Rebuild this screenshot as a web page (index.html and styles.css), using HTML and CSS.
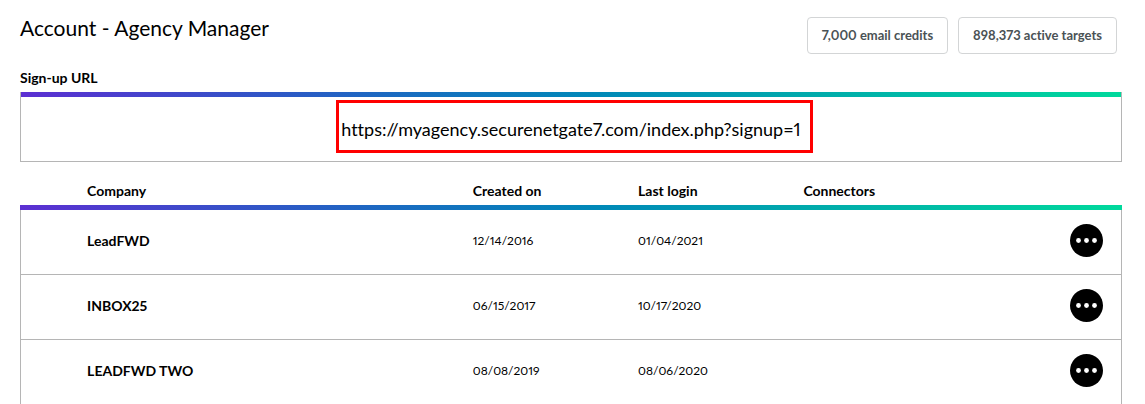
FILE: index.html
```html
<!DOCTYPE html>
<html lang="en">
<head>
  <meta charset="UTF-8">
  <meta name="viewport" content="width=device-width, initial-scale=1.0">
  <title>Account - Agency Manager</title>
  <link rel="stylesheet" href="styles.css">
</head>
<body>

  <header class="page-header">
    <h1>Account - Agency Manager</h1>
    <div class="stats">
      <span class="stat">7,000 email credits</span>
      <span class="stat">898,373 active targets</span>
    </div>
  </header>

  <!-- Sign-up URL -->
  <section class="signup">
    <h2>Sign-up URL</h2>
    <div class="signup-box">
      <a class="signup-link" href="https://myagency.securenetgate7.com/index.php?signup=1">https://myagency.securenetgate7.com/index.php?signup=1</a>
    </div>
  </section>

  <!-- Companies -->
  <table class="companies">
    <colgroup>
      <col class="col-check">
      <col class="col-company">
      <col class="col-date">
      <col class="col-date">
      <col class="col-connectors">
      <col class="col-menu">
    </colgroup>
    <thead>
      <tr>
        <th></th>
        <th scope="col">Company</th>
        <th scope="col">Created on</th>
        <th scope="col">Last login</th>
        <th scope="col">Connectors</th>
        <th></th>
      </tr>
      <tr class="bar">
        <td colspan="6"></td>
      </tr>
    </thead>
    <tbody>
      <tr>
        <td></td>
        <td class="name">LeadFWD</td>
        <td>12/14/2016</td>
        <td>01/04/2021</td>
        <td></td>
        <td class="menu">
          <button type="button" class="menu-btn" aria-label="LeadFWD options">
            <svg width="33" height="33" viewBox="0 0 33 33"><circle cx="16.5" cy="16.5" r="16.5"/><g fill="#fff"><circle cx="8.5" cy="16.5" r="2.4"/><circle cx="16.5" cy="16.5" r="2.4"/><circle cx="24.5" cy="16.5" r="2.4"/></g></svg>
          </button>
        </td>
      </tr>
      <tr>
        <td></td>
        <td class="name">INBOX25</td>
        <td>06/15/2017</td>
        <td>10/17/2020</td>
        <td></td>
        <td class="menu">
          <button type="button" class="menu-btn" aria-label="INBOX25 options">
            <svg width="33" height="33" viewBox="0 0 33 33"><circle cx="16.5" cy="16.5" r="16.5"/><g fill="#fff"><circle cx="8.5" cy="16.5" r="2.4"/><circle cx="16.5" cy="16.5" r="2.4"/><circle cx="24.5" cy="16.5" r="2.4"/></g></svg>
          </button>
        </td>
      </tr>
      <tr>
        <td></td>
        <td class="name">LEADFWD TWO</td>
        <td>08/08/2019</td>
        <td>08/06/2020</td>
        <td></td>
        <td class="menu">
          <button type="button" class="menu-btn" aria-label="LEADFWD TWO options">
            <svg width="33" height="33" viewBox="0 0 33 33"><circle cx="16.5" cy="16.5" r="16.5"/><g fill="#fff"><circle cx="8.5" cy="16.5" r="2.4"/><circle cx="16.5" cy="16.5" r="2.4"/><circle cx="24.5" cy="16.5" r="2.4"/></g></svg>
          </button>
        </td>
      </tr>
    </tbody>
  </table>

</body>
</html>
```
FILE: styles.css
```css
* {
  margin: 0;
  padding: 0;
  box-sizing: border-box;
}

:root {
  --bar: linear-gradient(90deg, #5c2fd2, #1b69c1 33%, #0088b8 52%, #00a9ac 71%, #00d99c);
  --line: #b5b5b5;
}

body {
  background: #fff;
  color: #000;
  font-family: 'Proxima Nova', 'Lato', sans-serif;
  font-size: 13px;
  font-variant-ligatures: none;
  font-variant-numeric: proportional-nums;
  line-height: 20px;
  padding: 16px 23px 0 20px;
}

.page-header {
  display: flex;
  justify-content: space-between;
  align-items: flex-start;
  height: 52px;
}

h1 {
  font-size: 21px;
  font-weight: normal;
  line-height: 24px;
}

.stats {
  display: flex;
  gap: 10px;
  padding: 1px 5px 0 0;
}

.stat {
  border: 1px solid #d3d5d6;
  border-radius: 4px;
  padding: 7px 14px 8px;
  color: #4a5255;
  font-weight: bold;
}

h2 {
  font-size: 14px;
  line-height: 20px;
  padding-bottom: 4px;
}

.signup-box {
  display: flex;
  justify-content: center;
  align-items: center;
  height: 70px;
  padding-top: 5px;
  border: 1px solid var(--line);
  border-top: 0;
  background: var(--bar) border-box top / 100% 5px no-repeat;
}

.signup-link {
  position: relative;
  color: #000;
  font-size: 18px;
  line-height: 24px;
  text-decoration: none;
}

/* red frame around the link */
.signup-link::after {
  content: '';
  position: absolute;
  inset: -17px -12px -12px -5px;
  border: 3px solid #f00;
}

.companies {
  width: 100%;
  margin-top: 19px;
  table-layout: fixed;
  border-collapse: separate;
  border-spacing: 0;
}

.col-check {
  width: 6%;
}

.col-company {
  width: 35%;
}

.col-date,
.col-connectors {
  width: 15%;
}

th {
  height: 24px;
  padding-left: 1px;
  font-size: 14px;
  text-align: left;
  vertical-align: top;
}

.bar td {
  height: 5px;
  background: var(--bar);
}

tbody td {
  height: 65px;
  padding: 0 0 2px 1px;
  border-bottom: 1px solid var(--line);
  font-size: 12px;
}

tbody td:first-child {
  border-left: 1px solid var(--line);
}

tbody td:last-child {
  border-right: 1px solid var(--line);
}

tbody .name {
  font-size: 14px;
  font-weight: bold;
}

tbody .menu {
  padding: 0 18px 3px 0;
  text-align: right;
}

.menu-btn {
  width: 33px;
  height: 33px;
  border: 0;
  background: none;
  cursor: pointer;
  vertical-align: middle;
}

.menu-btn svg {
  display: block;
}
```
